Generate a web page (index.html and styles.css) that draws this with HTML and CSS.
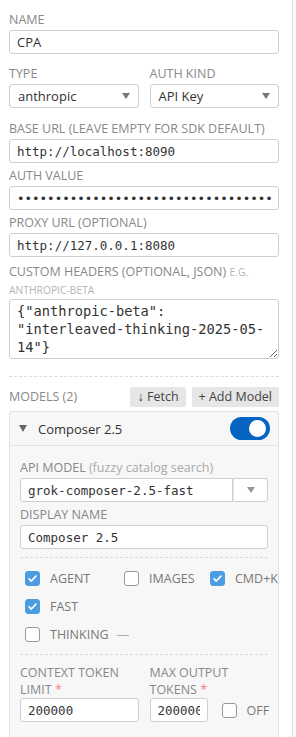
FILE: index.html
```html
<!DOCTYPE html>
<html>
<head>
<meta charset="utf-8">
<link rel="stylesheet" href="styles.css">
</head>
<body>
<div class="app">
  <main class="panel">
    <div class="field top first">
      <label class="lbl">Name</label>
      <input class="inp sans" value="CPA">
    </div>
    <div class="row2">
      <div class="field top">
        <label class="lbl">Type</label>
        <div class="select"><span>anthropic</span><span class="caret"></span></div>
      </div>
      <div class="field top">
        <label class="lbl">Auth kind</label>
        <div class="select"><span>API Key</span><span class="caret"></span></div>
      </div>
    </div>
    <div class="field">
      <label class="lbl">Base URL (leave empty for SDK default)</label>
      <input class="inp" value="http://localhost:8090">
    </div>
    <div class="field">
      <label class="lbl">Auth value</label>
      <input class="inp" type="password" value="sk-abcdefghijklmnopqrstuvwxyz0123456789abcdef">
    </div>
    <div class="field more">
      <label class="lbl">Proxy URL (optional)</label>
      <input class="inp" value="http://127.0.0.1:8080">
    </div>
    <div class="field">
      <label class="lbl ml">Custom headers (optional, JSON) <span class="hint">e.g. anthropic-beta</span></label>
      <textarea class="ta" rows="3">{"anthropic-beta":
"interleaved-thinking-2025-05-
14"}</textarea>
    </div>
    <div class="divider"></div>
    <div class="models-head">
      <span class="lbl">Models (2)</span>
      <div class="btns">
        <button class="btn">↓ Fetch</button>
        <button class="btn">+ Add Model</button>
      </div>
    </div>
    <section class="card">
      <div class="card-head">
        <span class="tri"></span>
        <span class="card-title">Composer 2.5</span>
        <span class="toggle"><span class="knob"></span></span>
      </div>
      <div class="card-body">
        <div class="field">
          <label class="lbl">API model <span class="lc">(fuzzy catalog search)</span></label>
          <div class="combo">
            <input class="inp" value="grok-composer-2.5-fast">
            <span class="combo-btn"><span class="caret"></span></span>
          </div>
        </div>
        <div class="field">
          <label class="lbl">Display name</label>
          <input class="inp" value="Composer 2.5">
        </div>
        <div class="divider in"></div>
        <div class="checks">
          <div class="chk"><span class="cb on"><svg viewBox="0 0 15 15"><path d="M3.5 7.8l2.6 2.6 5.4-5.6" fill="none" stroke="#fff" stroke-width="2" stroke-linecap="round" stroke-linejoin="round"/></svg></span>Agent</div>
          <div class="chk"><span class="cb"></span>Images</div>
          <div class="chk"><span class="cb on"><svg viewBox="0 0 15 15"><path d="M3.5 7.8l2.6 2.6 5.4-5.6" fill="none" stroke="#fff" stroke-width="2" stroke-linecap="round" stroke-linejoin="round"/></svg></span>Cmd+K</div>
          <div class="chk"><span class="cb on"><svg viewBox="0 0 15 15"><path d="M3.5 7.8l2.6 2.6 5.4-5.6" fill="none" stroke="#fff" stroke-width="2" stroke-linecap="round" stroke-linejoin="round"/></svg></span>Fast</div>
          <div class="chk full"><span class="cb"></span>Thinking <span class="dash">—</span></div>
        </div>
        <div class="divider in2"></div>
        <div class="tokens">
          <div class="field">
            <label class="lbl ml2">Context token limit <span class="req">*</span></label>
            <input class="inp" value="200000">
          </div>
          <div class="field">
            <label class="lbl ml2">Max output tokens <span class="req">*</span></label>
            <div class="maxrow">
              <input class="inp narrow" value="200000">
              <div class="chk off"><span class="cb"></span>Off</div>
            </div>
          </div>
        </div>
      </div>
    </section>
  </main>
  <div class="scroll"></div>
</div>
</body>
</html>
```
FILE: styles.css
```css
* { box-sizing: border-box; }
html, body { margin: 0; padding: 0; background: #fff; overflow: hidden; }
body { font-family: "Open Sans", "Noto Sans", sans-serif; font-size: 12.5px; color: #333; }

.app { display: flex; height: 737px; }
.panel { width: 292px; flex: none; padding: 12px 13px 0 9px; }
.scroll { flex: 1; border-left: 1px solid #e4e4e4; background: #f8f8f8; }

.field { display: flex; flex-direction: column; margin-bottom: 5px; min-width: 0; }
.field.top { margin-bottom: 13px; }
.field.top.first { margin-bottom: 12px; }
.field.more { margin-bottom: 6px; }
.lbl { display: block; font-size: 12.5px; line-height: 16px; color: #888; text-transform: uppercase; margin-bottom: 2px; white-space: nowrap; }
.lbl.ml { white-space: normal; line-height: 18px; margin-bottom: 0; }
.lbl.ml2 { white-space: normal; line-height: 17px; margin-bottom: 0; }
.hint { font-size: 10.3px; color: #b5b5b5; }
.lc { text-transform: none; color: #aaa; }
.req { color: #f08a8a; }

.inp { display: block; width: 100%; height: 24px; border: 1px solid #cfcfcf; border-radius: 3px; padding: 0 7px; background: #fff; font-family: "DejaVu Sans Mono", monospace; font-size: 12.5px; color: #333; outline: none; }
.inp.sans { font-family: "Open Sans", sans-serif; font-size: 13px; }

.row2 { display: grid; grid-template-columns: 1fr 1fr; column-gap: 11px; }
.select { display: flex; align-items: center; justify-content: space-between; height: 24px; border: 1px solid #cfcfcf; border-radius: 3px; padding: 0 8px 0 8px; font-size: 13px; color: #333; background: #fff; }
.caret { width: 0; height: 0; border-left: 4px solid transparent; border-right: 4px solid transparent; border-top: 6px solid #777; }

.ta { display: block; width: 100%; height: 60px; border: 1px solid #cfcfcf; border-radius: 3px; padding: 2px 7px; font-family: "DejaVu Sans Mono", monospace; font-size: 13.7px; line-height: 18px; color: #333; resize: vertical; overflow: hidden; outline: none; }

.divider { border-top: 1px dashed #dcdcdc; margin: 17px 0 10px; }
.divider.in { margin: 8px 0 0; }
.divider.in2 { margin: 6px 0 0; }

.models-head { display: flex; align-items: center; justify-content: space-between; }
.models-head .lbl { margin: 0; }
.btns { display: flex; gap: 6px; }
.btn { height: 20px; border: none; border-radius: 2px; background: #e6e6e6; color: #444; font-family: "Open Sans", sans-serif; font-size: 12.5px; padding: 0 7px; line-height: 20px; }

.card { margin-top: 4px; border: 1px solid #e3e3e3; border-radius: 3px; background: #f7f7f7; overflow: hidden; height: 400px; }
.card-head { display: flex; align-items: center; height: 34px; padding: 0 8px 0 9px; border-bottom: 1px solid #e3e3e3; }
.tri { width: 0; height: 0; border-left: 4px solid transparent; border-right: 4px solid transparent; border-top: 7px solid #666; margin-right: 11px; }
.card-title { flex: 1; font-size: 13px; color: #333; }
.toggle { position: relative; width: 40px; height: 23px; border-radius: 12px; background: #0563c1; }
.knob { position: absolute; right: 4px; top: 3px; width: 17px; height: 17px; border-radius: 50%; background: #fff; }

.card-body { padding: 14px 10px 0; }
.combo { display: flex; }
.combo .inp { flex: 1; border-radius: 3px 0 0 3px; }
.combo-btn { width: 35px; height: 24px; border: 1px solid #cfcfcf; border-left: 1px solid #e6e6e6; border-radius: 0 3px 3px 0; background: #fff; display: flex; align-items: center; justify-content: center; }
.combo-btn .caret { border-top-color: #999; }

.checks { display: grid; grid-template-columns: 99px 86px 1fr; grid-auto-rows: 28px; padding-top: 6px; }
.chk { display: flex; align-items: center; padding-left: 5px; font-size: 12.5px; color: #777; text-transform: uppercase; white-space: nowrap; }
.chk.full { grid-column: 1 / -1; }
.dash { color: #aaa; margin-left: 8px; }
.cb { flex: none; width: 15px; height: 15px; border: 1px solid #999; border-radius: 3px; background: #fff; margin-right: 10px; display: flex; }
.cb.on { background: #4a9de0; border-color: #4a9de0; }
.cb svg { width: 13px; height: 13px; }

.tokens { display: grid; grid-template-columns: 1fr 1fr; column-gap: 11px; padding-top: 9px; }
.tokens .field { margin-bottom: 0; }
.maxrow { display: flex; align-items: center; }
.inp.narrow { width: 58px; flex: none; }
.chk.off { height: 24px; padding-left: 14px; }
```
